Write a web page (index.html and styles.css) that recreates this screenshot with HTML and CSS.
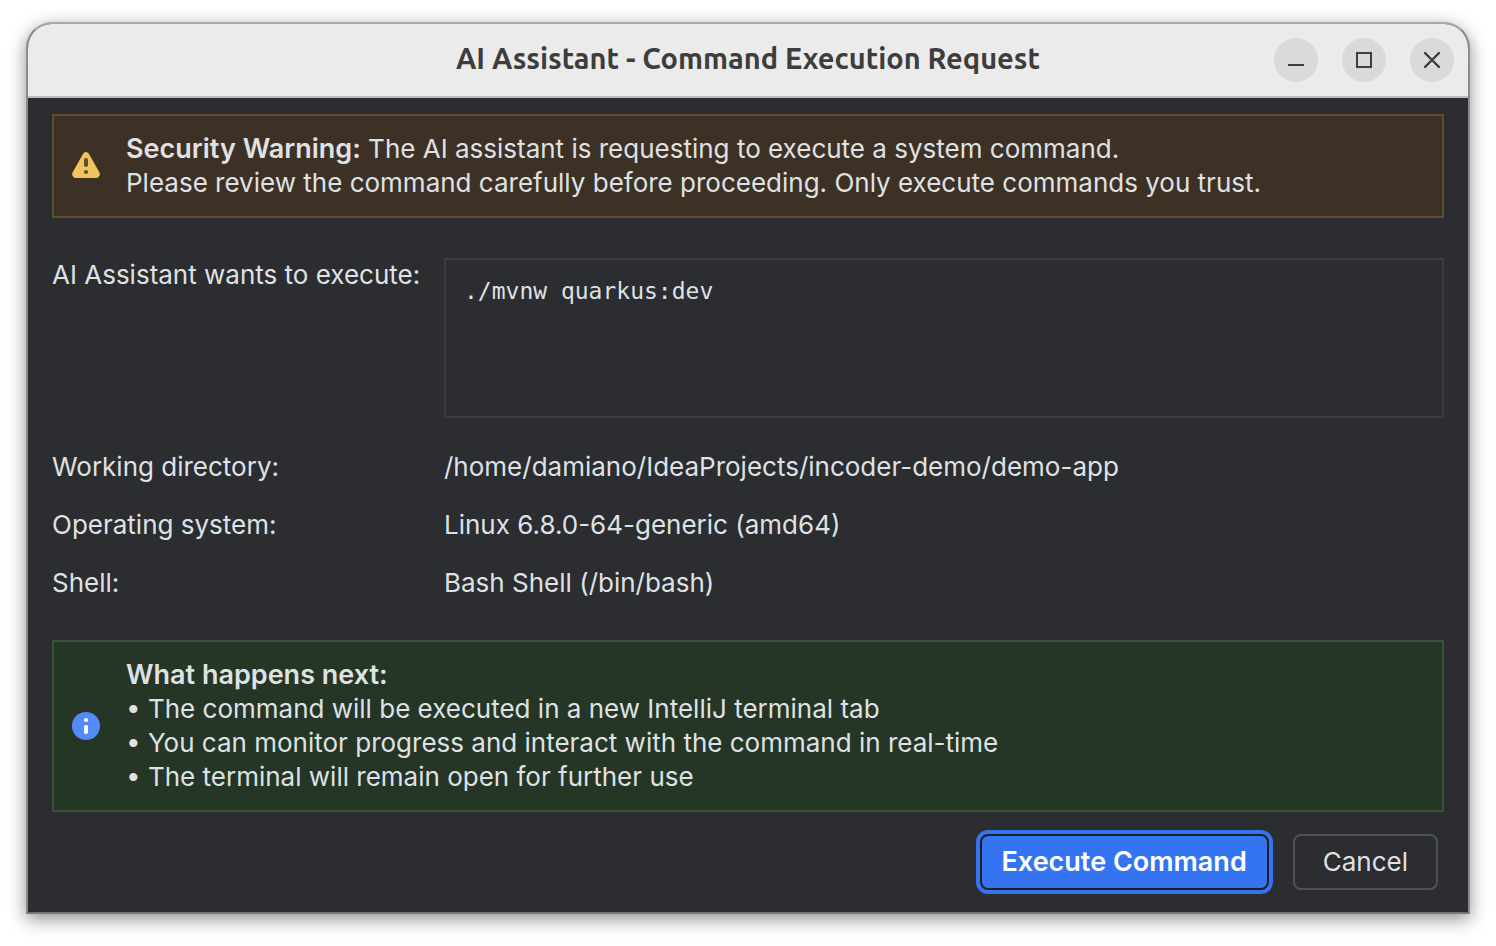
FILE: index.html
```
<!DOCTYPE html>
<html lang="en">
<head>
<meta charset="utf-8">
<meta name="viewport" content="width=device-width, initial-scale=1">
<title>AI Assistant - Command Execution Request</title>
<link rel="stylesheet" href="styles.css">
</head>
<body>
<main class="window" role="dialog" aria-labelledby="dialog-title">
  <header class="titlebar">
    <h1 class="title" id="dialog-title">AI Assistant - Command Execution Request</h1>
    <div class="window-controls">
      <button class="control" type="button" aria-label="Minimize"><svg viewBox="0 0 44 44"><path d="M14 27h16" /></svg></button>
      <button class="control" type="button" aria-label="Maximize"><svg viewBox="0 0 44 44"><path d="M15 15h14v14H15z" /></svg></button>
      <button class="control" type="button" aria-label="Close"><svg viewBox="0 0 44 44"><path d="M15 15l14 14M29 15L15 29" stroke-width="2.4" stroke-linecap="round" /></svg></button>
    </div>
  </header>
  <form class="content">
    <section class="banner banner-warning">
      <svg class="banner-icon" viewBox="0 0 28 28" aria-hidden="true">
        <path d="M10.700 2.400C11.500.9 12.600 0 14 0s2.500.9 3.300 2.400l10 17.800c1.400 2.800-.2 5.800-3.300 5.800H4c-3.100 0-4.700-3-3.300-5.800z" fill="#f2c55c" />
        <rect x="12" y="6" width="4" height="9" rx="2" fill="#5e4d33" />
        <circle cx="14" cy="20" r="2.100" fill="#5e4d33" />
      </svg>
      <p class="banner-text"><strong>Security Warning:</strong> The AI assistant is requesting to execute a system command.<br>Please review the command carefully before proceeding. Only execute commands you trust.</p>
    </section>
    <div class="command-row">
      <label for="command">AI Assistant wants to execute:</label>
      <textarea class="command" id="command" spellcheck="false" readonly>./mvnw quarkus:dev</textarea>
    </div>
    <dl class="details">
      <div class="detail"><dt>Working directory:</dt><dd>/home/damiano/IdeaProjects/incoder-demo/demo-app</dd></div>
      <div class="detail"><dt>Operating system:</dt><dd>Linux 6.8.0-64-generic (amd64)</dd></div>
      <div class="detail"><dt>Shell:</dt><dd>Bash Shell (/bin/bash)</dd></div>
    </dl>
    <section class="banner banner-info">
      <svg class="banner-icon" viewBox="0 0 28 28" aria-hidden="true">
        <circle cx="14" cy="14" r="14" fill="#548af7" />
        <circle cx="14" cy="8" r="2.100" fill="#fff" />
        <rect x="12" y="13" width="4" height="9" rx="1.800" fill="#fff" />
      </svg>
      <div class="banner-text">
        <p><strong>What happens next:</strong></p>
        <p>• The command will be executed in a new IntelliJ terminal tab</p>
        <p>• You can monitor progress and interact with the command in real-time</p>
        <p>• The terminal will remain open for further use</p>
      </div>
    </section>
    <footer class="actions">
      <button class="button button-primary" type="button">Execute Command</button>
      <button class="button" type="button">Cancel</button>
    </footer>
  </form>
</main>
</body>
</html>
```
FILE: styles.css
```
* { box-sizing: border-box; }

body {
  margin: 0;
  padding: 22px 26px 32px;
  background: #fff;
  color: #dfe1e5;
  font-family: Inter, sans-serif;
  font-size: 26px;
  line-height: 34px;
}

.window {
  overflow: hidden;
  border: 2px solid #8c8c8c;
  border-top-color: #a6a6a6;
  border-bottom-color: #757575;
  border-radius: 26px 26px 0 0;
  background: #2b2d30;
  box-shadow: 0 5px 18px rgba(0, 0, 0, 0.45);
}

.titlebar {
  display: grid;
  grid-template-columns: 1fr auto 1fr;
  align-items: center;
  height: 74px;
  padding: 0 14px;
  border-bottom: 2px solid #bdbdbd;
  background: #ebebeb;
  color: #3d3d3d;
}

.title {
  grid-column: 2;
  margin: 0;
  padding-bottom: 4px;
  font-family: Ubuntu, "Noto Sans", sans-serif;
  font-size: 29px;
  font-weight: 700;
  line-height: 34px;
}

.window-controls {
  display: flex;
  justify-content: flex-end;
  gap: 24px;
}

.control {
  width: 44px;
  height: 44px;
  padding: 0;
  border: 0;
  border-radius: 50%;
  background: #dadada;
}

.control svg {
  display: block;
  fill: none;
  stroke: #3d3d3d;
  stroke-width: 2;
}

.content { padding: 16px 24px 22px; }

.banner {
  display: flex;
  align-items: center;
  gap: 26px;
  padding: 16px 18px;
  border: 2px solid;
}

.banner-warning { border-color: #5e4d33; background: #3d3126; }
.banner-info { border-color: #375239; background: #253627; }

.banner-icon { flex: none; width: 28px; height: 28px; }

.banner-text, .banner-text p { margin: 0; }

strong {
  font-size: 27px;
  font-weight: 600;
  line-height: 1;
}

.command-row, .detail {
  display: grid;
  grid-template-columns: 372px 1fr;
  column-gap: 20px;
}

.command-row { margin: 40px 0 32px; }

.command {
  display: block;
  width: 100%;
  height: 160px;
  padding: 16px 18px;
  border: 2px solid #393b40;
  outline: 0;
  resize: none;
  background: transparent;
  color: inherit;
  font: 23px/30px "DejaVu Sans Mono", monospace;
}

.details {
  display: grid;
  gap: 24px;
  margin: 0 0 40px;
}

dd { margin: 0; }

.actions {
  display: flex;
  justify-content: flex-end;
  gap: 24px;
  padding: 22px 6px 0;
}

.button {
  height: 56px;
  padding: 0 28px;
  border: 2px solid #4e5157;
  border-radius: 8px;
  background: transparent;
  color: inherit;
  font: inherit;
}

.button-primary {
  padding: 0 20px;
  border-color: #1e1f22;
  background: #3574f0;
  box-shadow: 0 0 0 4px #3574f0;
  color: #fff;
  font-size: 27px;
  font-weight: 600;
}
```
